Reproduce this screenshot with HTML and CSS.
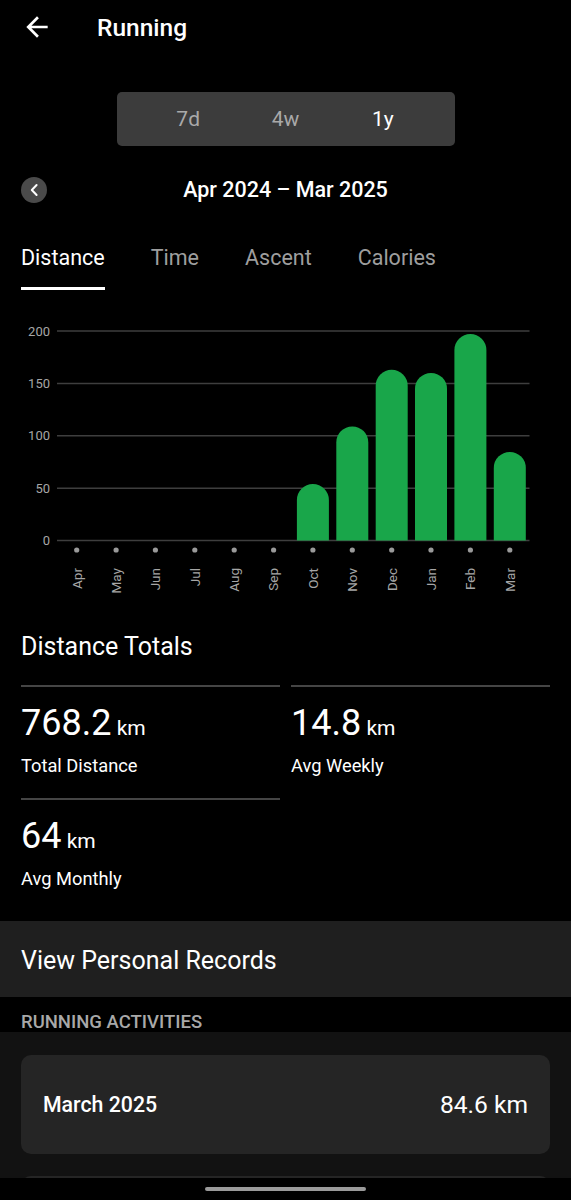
FILE: index.html
```html
<!DOCTYPE html>
<html lang="en">
<head>
  <meta charset="UTF-8">
  <meta name="viewport" content="width=device-width, initial-scale=1.0">
  <title>Running</title>
  <link rel="stylesheet" href="styles.css">
</head>
<body>
  <div class="screen">
    <div class="screen__content">
      <header class="app-header">
        <svg class="app-header__back" width="32" height="32" viewBox="0 0 24 24">
          <path d="M20 11H7.83l5.59-5.59L12 4l-8 8 8 8 1.41-1.41L7.83 13H20v-2z" fill="#fff"/>
        </svg>
        <div class="app-header__title">Running</div>
      </header>

      <div class="range-switch">
        <div class="range-switch__item">7d</div>
        <div class="range-switch__item">4w</div>
        <div class="range-switch__item range-switch__item--active">1y</div>
      </div>

      <div class="period-row">
        <div class="period-row__prev">
          <svg width="26" height="26" viewBox="0 0 26 26">
            <polyline points="15.6,8 10.8,13 15.6,18" fill="none" stroke="#fff" stroke-width="2" stroke-linecap="round" stroke-linejoin="round"/>
          </svg>
        </div>
        <div class="period-row__label">Apr 2024 – Mar 2025</div>
        <div></div>
      </div>

      <nav class="metric-tabs">
        <div class="metric-tabs__item metric-tabs__item--active">Distance</div>
        <div class="metric-tabs__item">Time</div>
        <div class="metric-tabs__item">Ascent</div>
        <div class="metric-tabs__item">Calories</div>
      </nav>

      <svg class="chart" width="571" height="290" viewBox="0 0 571 290">
        <g stroke="#3e3e3e" stroke-width="1.5">
          <line x1="57" y1="21" x2="529.5" y2="21"/>
          <line x1="57" y1="73.4" x2="529.5" y2="73.4"/>
          <line x1="57" y1="125.8" x2="529.5" y2="125.8"/>
          <line x1="57" y1="178.2" x2="529.5" y2="178.2"/>
          <line x1="57" y1="230.6" x2="529.5" y2="230.6"/>
        </g>
        <g class="chart__axis" text-anchor="end">
          <text x="50" y="25.6">200</text>
          <text x="50" y="78">150</text>
          <text x="50" y="130.4">100</text>
          <text x="50" y="182.8">50</text>
          <text x="50" y="235.2">0</text>
        </g>
        <g fill="#19a64a">
          <path d="M296.9 230.6V190a16 16 0 0 1 32 0v40.6z"/>
          <path d="M336.3 230.6V132.4a16 16 0 0 1 32 0v98.2z"/>
          <path d="M375.7 230.6V75.8a16 16 0 0 1 32 0v154.8z"/>
          <path d="M415 230.6V78.9a16 16 0 0 1 32 0v151.7z"/>
          <path d="M454.4 230.6V40.1a16 16 0 0 1 32 0v190.5z"/>
          <path d="M493.8 230.6V157.9a16 16 0 0 1 32 0v72.7z"/>
        </g>
        <g fill="#9a9a9a">
          <circle cx="76.7" cy="240" r="2.6"/>
          <circle cx="116.1" cy="240" r="2.6"/>
          <circle cx="155.4" cy="240" r="2.6"/>
          <circle cx="194.8" cy="240" r="2.6"/>
          <circle cx="234.2" cy="240" r="2.6"/>
          <circle cx="273.6" cy="240" r="2.6"/>
          <circle cx="312.9" cy="240" r="2.6"/>
          <circle cx="352.3" cy="240" r="2.6"/>
          <circle cx="391.7" cy="240" r="2.6"/>
          <circle cx="431" cy="240" r="2.6"/>
          <circle cx="470.4" cy="240" r="2.6"/>
          <circle cx="509.8" cy="240" r="2.6"/>
        </g>
        <g class="chart__axis chart__axis--months" text-anchor="end">
          <text transform="translate(81.5 258) rotate(-90)">Apr</text>
          <text transform="translate(120.9 258) rotate(-90)">May</text>
          <text transform="translate(160.2 258) rotate(-90)">Jun</text>
          <text transform="translate(199.6 258) rotate(-90)">Jul</text>
          <text transform="translate(239 258) rotate(-90)">Aug</text>
          <text transform="translate(278.4 258) rotate(-90)">Sep</text>
          <text transform="translate(317.7 258) rotate(-90)">Oct</text>
          <text transform="translate(357.1 258) rotate(-90)">Nov</text>
          <text transform="translate(396.5 258) rotate(-90)">Dec</text>
          <text transform="translate(435.8 258) rotate(-90)">Jan</text>
          <text transform="translate(475.2 258) rotate(-90)">Feb</text>
          <text transform="translate(514.6 258) rotate(-90)">Mar</text>
        </g>
      </svg>

      <section class="totals">
        <h2 class="totals__title">Distance Totals</h2>
        <div class="totals__grid">
          <div class="totals__cell">
            <div class="totals__value">768.2<span class="totals__unit"> km</span></div>
            <div class="totals__label">Total Distance</div>
          </div>
          <div class="totals__cell">
            <div class="totals__value">14.8<span class="totals__unit"> km</span></div>
            <div class="totals__label">Avg Weekly</div>
          </div>
          <div class="totals__cell">
            <div class="totals__value">64<span class="totals__unit"> km</span></div>
            <div class="totals__label">Avg Monthly</div>
          </div>
        </div>
      </section>

      <div class="records-link">View Personal Records</div>

      <div class="section-label">RUNNING ACTIVITIES</div>

      <div class="activity-list">
        <div class="activity-card">
          <div class="activity-card__month">March 2025</div>
          <div class="activity-card__total">84.6 km</div>
        </div>
        <div class="activity-card"></div>
      </div>
    </div>

    <div class="system-bar">
      <div class="system-bar__handle"></div>
    </div>
  </div>
</body>
</html>
```
FILE: styles.css
```css
/* Base */
body {
  margin: 0;
  background: #000;
  color: #fff;
  font-family: Roboto, "Noto Sans", "Liberation Sans", sans-serif;
}

.screen {
  height: 100vh;
  display: flex;
  flex-direction: column;
  overflow: hidden;
}

.screen__content {
  flex: 1;
  overflow: hidden;
}

/* Header */
.app-header {
  display: flex;
  align-items: center;
  height: 54px;
  padding-left: 21px;
}

.app-header__back {
  display: block;
}

.app-header__title {
  margin-left: 44px;
  font-size: 24.5px;
  font-weight: 500;
  line-height: 32px;
  padding-top: 2px;
}

/* 7d / 4w / 1y */
.range-switch {
  display: flex;
  width: 338px;
  height: 54px;
  margin: 38px auto 0;
  padding: 0 23px;
  box-sizing: border-box;
  background: #3c3c3c;
  border-radius: 5px;
}

.range-switch__item {
  flex: 1;
  display: flex;
  align-items: center;
  justify-content: center;
  font-size: 21px;
  color: #a9a9a9;
}

.range-switch__item--active {
  color: #fff;
}

/* Period row */
.period-row {
  display: grid;
  grid-template-columns: 26px 1fr 26px;
  align-items: center;
  margin-top: 31px;
  padding: 0 21px;
}

.period-row__prev {
  width: 26px;
  height: 26px;
  border-radius: 50%;
  background: #4a4a4a;
}

.period-row__prev svg {
  display: block;
}

.period-row__label {
  text-align: center;
  font-size: 21.5px;
  font-weight: 500;
  line-height: 26px;
}

/* Tabs */
.metric-tabs {
  display: flex;
  gap: 46px;
  margin-top: 41px;
  padding: 0 21px;
}

.metric-tabs__item {
  font-size: 21.5px;
  line-height: 28px;
  color: #9e9e9e;
  padding-bottom: 15px;
  border-bottom: 3px solid transparent;
}

.metric-tabs__item--active {
  color: #fff;
  border-bottom-color: #fff;
}

/* Chart */
.chart {
  display: block;
  margin-top: 20px;
}

.chart__axis {
  font-family: Roboto, "Noto Sans", sans-serif;
  font-size: 13px;
  fill: #a6a6a6;
}

.chart__axis--months {
  font-size: 13.5px;
}

/* Totals */
.totals {
  padding: 0 21px;
  margin-top: 31px;
}

.totals__title {
  margin: 0;
  font-size: 25px;
  font-weight: 400;
  line-height: 32px;
}

.totals__grid {
  display: grid;
  grid-template-columns: 1fr 1fr;
  column-gap: 11px;
  margin-top: 22px;
}

.totals__cell {
  border-top: 2px solid #454545;
  padding: 14px 0 20px;
}

.totals__value {
  font-size: 36px;
  line-height: 44px;
}

.totals__unit {
  font-size: 21px;
  line-height: 1;
}

.totals__label {
  margin-top: 9px;
  font-size: 18.3px;
  line-height: 24px;
}

/* Personal records */
.records-link {
  margin-top: 10px;
  padding: 24px 21px 20px;
  background: #1f1f1f;
  font-size: 25px;
  line-height: 32px;
}

.section-label {
  padding: 15px 21px 0;
  font-size: 18.5px;
  font-weight: 500;
  line-height: 20px;
  color: #a8a8a8;
}

/* Activities */
.activity-list {
  background: #121212;
  padding: 23px 21px;
  display: flex;
  flex-direction: column;
  gap: 22px;
}

.activity-card {
  display: flex;
  justify-content: space-between;
  align-items: center;
  flex-shrink: 0;
  height: 99px;
  padding: 0 22px;
  background: #252525;
  border-radius: 10px;
}

.activity-card__month {
  font-size: 21.3px;
  font-weight: 500;
}

.activity-card__total {
  font-size: 24.6px;
}

/* System nav */
.system-bar {
  height: 22px;
  display: flex;
  justify-content: center;
  padding-top: 9px;
  box-sizing: border-box;
  background: #000;
}

.system-bar__handle {
  width: 161px;
  height: 4px;
  border-radius: 2px;
  background: #9a9a9a;
}
```
